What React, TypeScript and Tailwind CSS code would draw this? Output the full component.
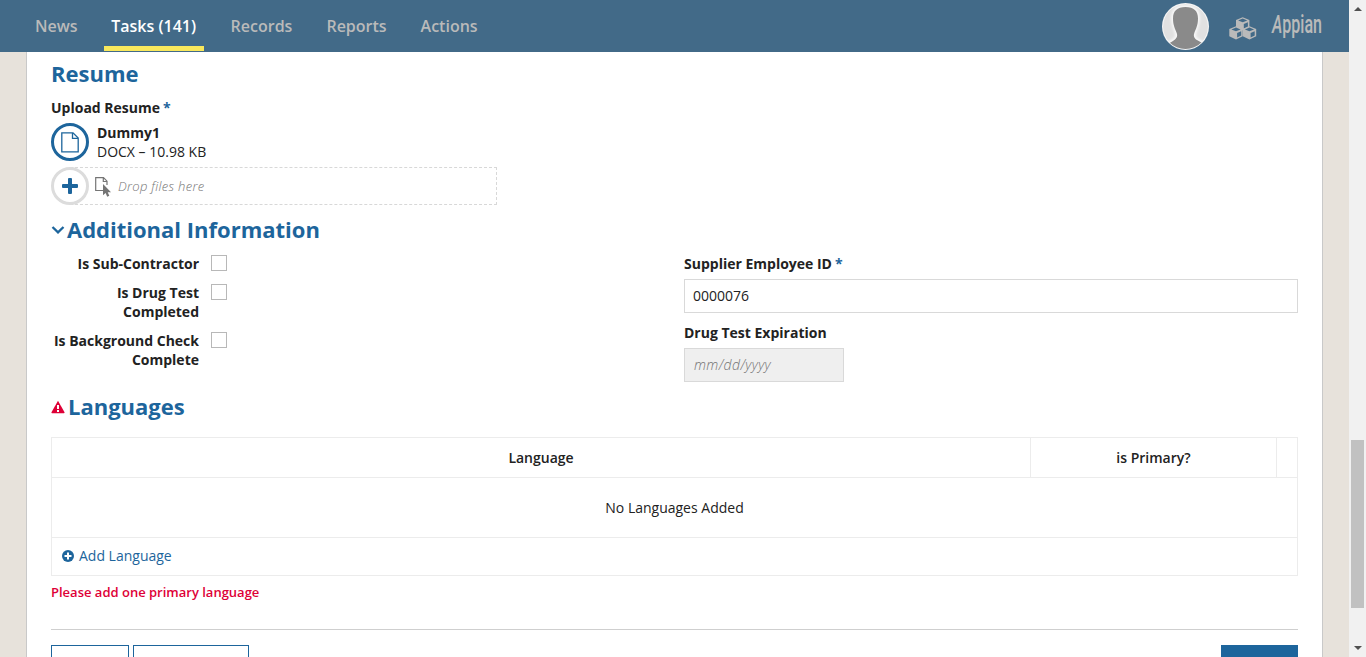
import React from "react";

const NAV = [
  { label: "News" },
  { label: "Tasks (141)", active: true },
  { label: "Records" },
  { label: "Reports" },
  { label: "Actions" },
];

const HEAD = "M23.500 5C15 5 11 9 11 16.500c0 6.500 2 10 3.700 14.500 1 2.600.3 4.500-1.700 6.500-2 2-5 2.500-8 5.500v7h38v-7c-3-3-6-3.500-9-5.500-2-2-2.700-3.900-1.700-6.500C34 26.500 36 23 36 16.500 36 9 32 5 23.500 5z";

function Avatar() {
  return (
    <svg width="48" height="48" viewBox="0 0 48 48">
      <defs>
        <clipPath id="face"><circle cx="23.500" cy="24.500" r="22.500" /></clipPath>
        <filter id="glow" x="-20%" y="-20%" width="140%" height="140%"><feGaussianBlur stdDeviation="1.600" /></filter>
      </defs>
      <circle cx="23.500" cy="24.500" r="23.500" fill="#f4f4f4" />
      <g clipPath="url(#face)">
        <circle cx="23.500" cy="24.500" r="22.500" fill="#e1e1e1" />
        <path d={HEAD} fill="none" stroke="#fff" strokeWidth="3" filter="url(#glow)" />
        <path d={HEAD} fill="#8a8a8a" />
      </g>
    </svg>
  );
}

function Cube({ x, y }: { x: number; y: number }) {
  return (
    <g transform={`translate(${x} ${y})`}>
      <path d="M7 .2 13.700 2.900V10.300L7 13.500.3 10.300V2.900z" fill="#bababa" />
      <path d="M7 1.600 11.600 3.400 7 5.300 2.400 3.400z" fill="#426a88" />
      <path d="M8.100 7.100 12.200 5.300V9.400L8.100 11.400z" fill="#426a88" />
    </g>
  );
}

function Cubes() {
  return (
    <svg width="28" height="23" viewBox="0 0 28 23">
      <Cube x={6.700} y={0} />
      <Cube x={0} y={9} />
      <Cube x={13.500} y={9} />
    </svg>
  );
}

function Page() {
  return (
    <svg width="18" height="21" viewBox="0 0 18 21" fill="none" stroke="#1d659c" strokeWidth="1.300">
      <path d="M.8.800H12L17.200 6V19.800H.8z" />
      <path d="M11.500 1V6.300H17" />
    </svg>
  );
}

function DropIcon() {
  return (
    <svg width="17" height="21" viewBox="0 0 17 21">
      <path d="M8 14.500H.7V1.700H8.500L12 5.200V9M8.300 2V5.500H12" fill="none" stroke="#757575" strokeWidth="1.200" />
      <path d="M8 8V19.200L10.600 17 12.200 20.700 14.300 19.800 12.700 16.200H16z" fill="#757575" />
    </svg>
  );
}

function Check({ label, className }: { label: string; className: string }) {
  return (
    <div className={`flex ${className}`}>
      <div className="w-[148px] text-right font-bold leading-[19px]">{label}</div>
      <span className="ml-3 mt-px size-4 shrink-0 border border-[#b8b8b8] bg-white" />
    </div>
  );
}

const Star = () => <span className="ml-[3px] text-[#1d659c]">*</span>;

export default function App() {
  return (
    <div className="flex h-[657px] w-[1366px] overflow-hidden bg-[#e7e2db] font-['Open_Sans',sans-serif] text-[14px] leading-[19px] text-[#222]">
      <div className="flex w-[1349px] flex-col">
        <header className="flex h-[52px] shrink-0 bg-[#426a88] pl-[28px] pr-[18px]">
          <nav className="flex gap-[20px] text-[16px] font-semibold text-[#bababa]">
            {NAV.map((n) => (
              <div
                key={n.label}
                className={
                  n.active
                    ? "mb-px -ml-px w-[100px] border-b-[5px] border-[#f9e85c] pt-[15px] text-center leading-[22px] text-white"
                    : "mb-px px-[7px] pt-[15px] leading-[22px]"
                }
              >
                {n.label}
              </div>
            ))}
          </nav>
          <div className="ml-auto flex">
            <div className="mt-[2px]"><Avatar /></div>
            <div className="ml-[19px] mt-[17px]"><Cubes /></div>
            <svg className="ml-[14px] mt-[6px] overflow-visible" width="60" height="40" viewBox="0 0 60 40">
              <text x="1" y="27" fontFamily="Roboto" fontSize="25" fontWeight="500" fill="#bababa" textLength="50" lengthAdjust="spacingAndGlyphs"><tspan fontStyle="italic">A</tspan>ppian</text>
            </svg>
          </div>
        </header>

        <main className="mx-[26px] flex h-[605px] flex-col border-x border-[#c9c9c9] bg-white px-6">
          <h2 className="mt-[6px] h-[30px] text-[22px] font-bold leading-[30px] text-[#1d659c]">Resume</h2>
          <div className="mt-[10px] font-bold">Upload Resume<Star /></div>
          <div className="mt-[6px] flex h-[38px]">
            <div className="flex size-[38px] items-center justify-center rounded-full border-[3px] border-[#1d659c]"><Page /></div>
            <div className="ml-2">
              <div className="font-bold">Dummy1</div>
              <div>DOCX – 10.98 KB</div>
            </div>
          </div>
          <div className="mt-[6px] flex h-[38px] w-[446px]">
            <div className="z-10 flex size-[38px] shrink-0 items-center justify-center rounded-full border-[3px] border-[#dcdcdc] bg-white">
              <svg width="16" height="16" viewBox="0 0 16 16"><path d="M6 1q0-1 1-1h2q1 0 1 1v5h5q1 0 1 1v2q0 1-1 1h-5v5q0 1-1 1H7q-1 0-1-1v-5H1q-1 0-1-1V7q0-1 1-1h5z" fill="#1d659c" /></svg>
            </div>
            <div className="-ml-[19px] flex flex-1 items-center border border-l-0 border-dashed border-[#d8d8d8] pl-[25px] text-[13px] font-light italic text-[#757575]">
              <DropIcon />
              <span className="ml-[6px] tracking-[0.3px]">Drop files here</span>
            </div>
          </div>

          <h2 className="mt-[9px] flex h-[30px] items-center text-[22px] font-bold leading-[30px] text-[#1d659c]">
            <svg className="mr-[2px] mt-[2px]" width="14" height="10" viewBox="0 0 14 10"><path d="M1.500 2 7 7.300 12.500 2" fill="none" stroke="#1d659c" strokeWidth="2.300" /></svg>
            Additional Information
          </h2>
          <div className="mt-[10px] flex h-[128px]">
            <div className="w-[633px]">
              <Check label="Is Sub-Contractor" className="h-[29px]" />
              <Check label="Is Drug Test Completed" className="h-[48px] [&>div]:pl-[50px]" />
              <Check label="Is Background Check Complete" className="h-[48px]" />
            </div>
            <div className="flex-1">
              <div className="font-bold">Supplier Employee ID<Star /></div>
              <div className="mt-[6px] h-[34px] border border-[#d9d9d9] px-2 leading-[32px]">0000076</div>
              <div className="mt-[10px] font-bold">Drug Test Expiration</div>
              <div className="mt-[6px] h-[34px] w-[160px] border border-[#d9d9d9] bg-[#efefef] px-[9px] font-light italic leading-[32px] tracking-[0.38px] text-[#757575]">mm/dd/yyyy</div>
            </div>
          </div>

          <h2 className="mt-[9px] flex h-[30px] items-center text-[22px] font-bold leading-[30px] text-[#1d659c]">
            <svg className="mr-[3px] mt-[2px]" width="14" height="14" viewBox="0 0 14 14">
              <path d="M7 .8 13.500 12.200Q13.900 13.300 12.800 13.300H1.200Q.1 13.300.5 12.200z" fill="#de0037" />
              <path d="M6 5h2v4H6zM6 10h2v2H6z" fill="#fff" />
            </svg>
            Languages
          </h2>
          <div className="mt-[16px] h-[139px] shrink-0 border border-[#ececec]">
            <div className="flex h-10 border-b border-[#ececec] text-center font-semibold leading-[39px]">
              <div className="w-[979px] border-r border-[#ececec]">Language</div>
              <div className="w-[246px] border-r border-[#ececec]">is Primary?</div>
            </div>
            <div className="h-[60px] border-b border-[#ececec] text-center leading-[59px]">No Languages Added</div>
            <div className="flex h-[36px] items-center pl-[10px] text-[#1d659c]">
              <svg width="12" height="12" viewBox="0 0 12 12"><circle cx="6" cy="6" r="6" fill="#1d659c" /><path d="M5 2.500h2V5h2.500v2H7v2.500H5V7H2.500V5H5z" fill="#fff" /></svg>
              <span className="-mt-px ml-[5px]">Add Language</span>
            </div>
          </div>
          <div className="mt-[7px] text-[13px] font-semibold text-[#de0037]">Please add one primary language</div>
          <div className="mt-[27px] border-t border-[#cfcfcf]" />
          <div className="mt-[15px] flex h-[12px] shrink-0 gap-1">
            <div className="w-[78px] border border-b-0 border-[#1d659c]" />
            <div className="w-[116px] border border-b-0 border-[#1d659c]" />
            <div className="ml-auto w-[77px] bg-[#1d659c]" />
          </div>
        </main>
      </div>
      <div className="flex w-[17px] flex-col items-center bg-[#f1f1f1]">
        <svg className="mt-[7px]" width="8" height="4" viewBox="0 0 8 4"><path d="M4 0 8 4H0z" fill="#505050" /></svg>
        <div className="mt-[429px] h-[168px] w-[13px] bg-[#c1c1c1]" />
        <svg className="mt-[38px]" width="8" height="4" viewBox="0 0 8 4"><path d="M0 0h8L4 4z" fill="#505050" /></svg>
      </div>
    </div>
  );
}
